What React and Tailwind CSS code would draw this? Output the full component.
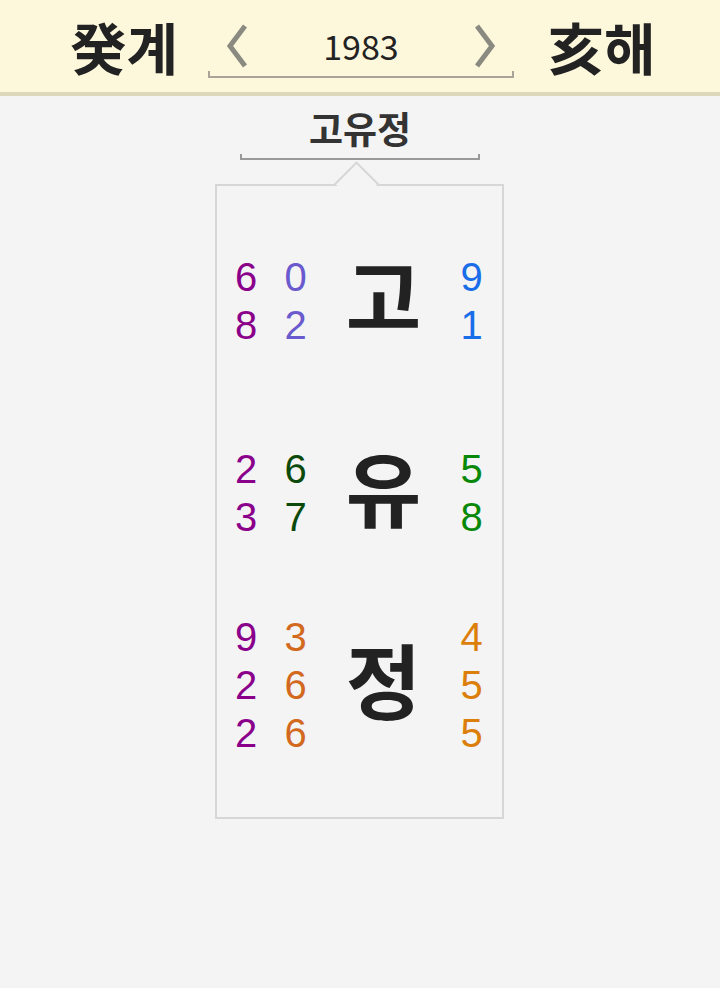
const KR = { fontFamily: '"Noto Sans CJK KR", "Noto Sans", sans-serif' };
const NUM = { fontFamily: '"Liberation Sans", Arial, sans-serif' };

const rows = [
  { a: ["6", "8"], ac: "text-[#8b008b]", b: ["0", "2"], bc: "text-[#6a5acd]", ch: "고", c: ["9", "1"], cc: "text-[#1a6de8]" },
  { a: ["2", "3"], ac: "text-[#8b008b]", b: ["6", "7"], bc: "text-[#0b4a0b]", ch: "유", c: ["5", "8"], cc: "text-[#088808]" },
  { a: ["9", "2", "2"], ac: "text-[#8b008b]", b: ["3", "6", "6"], bc: "text-[#d2691e]", ch: "정", c: ["4", "5", "5"], cc: "text-[#db7f0a]" },
];

function Digits({ list, color }) {
  return (
    <div className={`flex flex-col items-center text-[40px] leading-[48px] -mt-[6px] ${color}`} style={NUM}>
      {list.map((d, i) => (
        <span key={i}>{d}</span>
      ))}
    </div>
  );
}

function Chevron({ dir }) {
  return (
    <svg width="26" height="44" viewBox="0 0 26 44">
      <path
        d={dir === "left" ? "M21 2 L6 22 L21 42" : "M5 2 L20 22 L5 42"}
        fill="none"
        stroke="#8a8a80"
        strokeWidth="5"
      />
    </svg>
  );
}

export default function App() {
  return (
    <div className="w-[720px] h-[988px] bg-[#f4f4f4] overflow-hidden" style={KR}>
      {/* header */}
      <div className="h-[96px] bg-[#fdf7dc] border-b-[4px] border-[#ddd7bb] flex items-center">
        <div className="w-[208px] flex justify-end pr-[30px]">
          <span className="text-[56px] font-bold text-[#222] leading-none">癸계</span>
        </div>
        <div className="w-[306px] flex flex-col pt-[10px]">
          <div className="flex items-center justify-between px-[16px]">
            <Chevron dir="left" />
            <span className="text-[34px] text-[#222] leading-none" style={KR}>1983</span>
            <Chevron dir="right" />
          </div>
          <div className="mt-[3px] h-[7px] border-b-2 border-x-2 border-[#a8a598]" />
        </div>
        <div className="pl-[34px]">
          <span className="text-[56px] font-bold text-[#222] leading-none">亥해</span>
        </div>
      </div>

      {/* name */}
      <div className="flex flex-col items-center">
        <div className="mt-[6px] text-[37px] font-bold text-[#333] leading-[52px]">고유정</div>
        <div className="w-[240px] h-[6px] border-b-2 border-x-2 border-[#999]" />

        <div className="relative mt-[24px] -ml-[2px] w-[289px] h-[635px] border-2 border-[#d6d6d6] pt-[22px]">
          <div className="absolute -top-[27px] left-[116px] w-[48px] h-[27px] overflow-hidden">
            <div className="absolute left-[7px] top-[9px] w-[33px] h-[33px] bg-[#f4f4f4] border-2 border-[#d6d6d6] rotate-45" />
          </div>
          {rows.map((r, i) => (
            <div key={i} className="h-[192px] flex items-center">
              <div className="w-[49px] pl-[10px] flex justify-center">
                <Digits list={r.a} color={r.ac} />
              </div>
              <div className="w-[60px] flex justify-center">
                <Digits list={r.b} color={r.bc} />
              </div>
              <div className="w-[116px] flex justify-center -mt-[20px]">
                <span className="text-[82px] font-bold text-[#222] leading-none">{r.ch}</span>
              </div>
              <div className="w-[60px] flex justify-center">
                <Digits list={r.c} color={r.cc} />
              </div>
            </div>
          ))}
        </div>
      </div>
    </div>
  );
}
